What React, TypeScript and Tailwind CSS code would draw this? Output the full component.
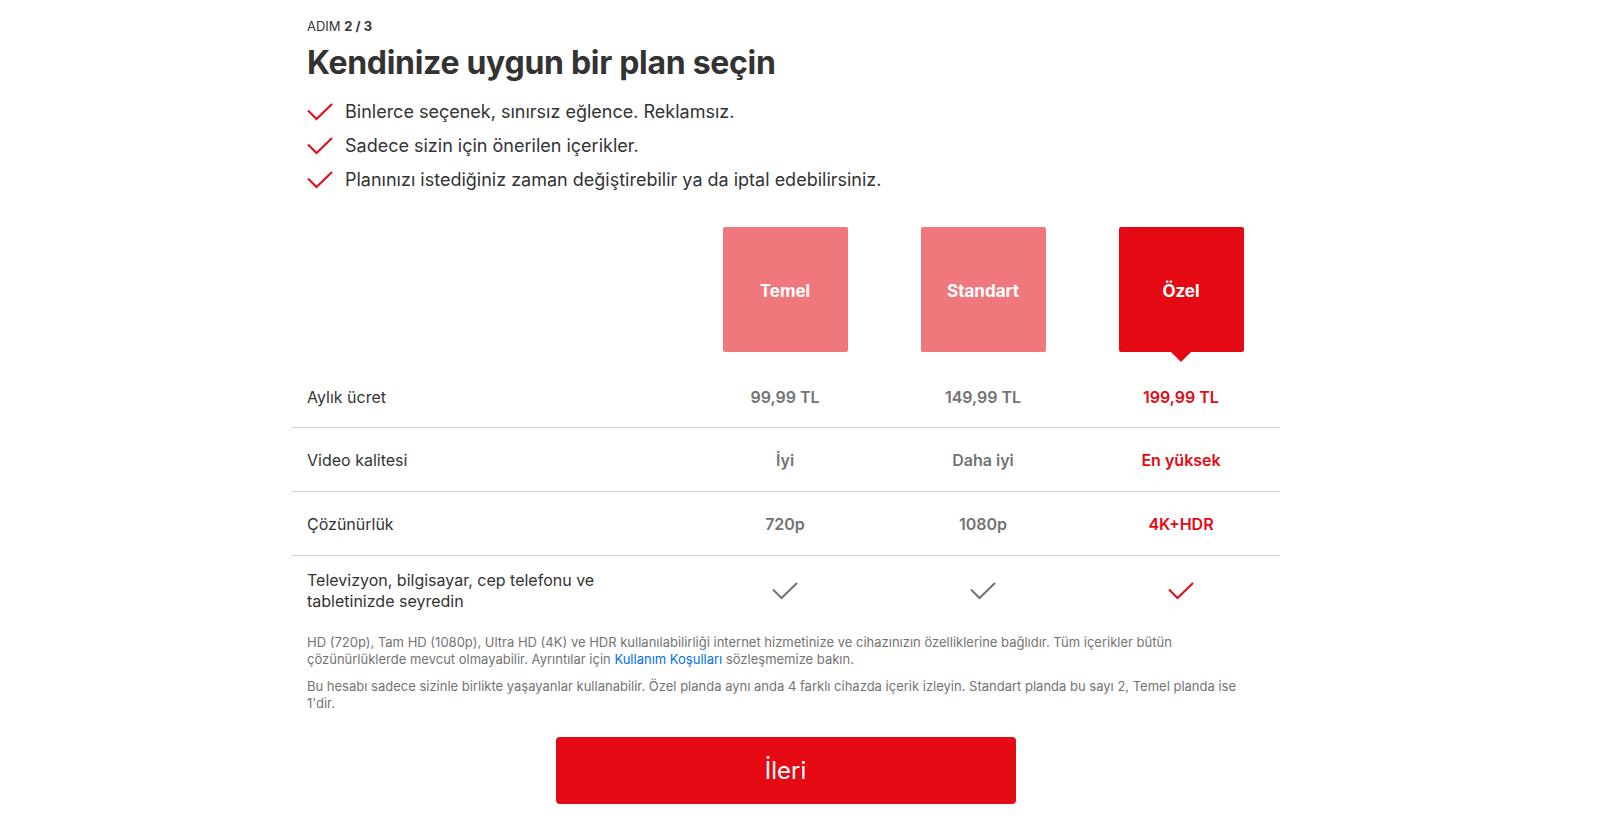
import React from "react";

function Check({ color, className }: { color: string; className?: string }) {
  return (
    <svg viewBox="0 0 26 18" width="26" height="18" className={className} fill="none">
      <polyline points="1,7.5 9.5,16 25,1" stroke={color} strokeWidth="2" strokeLinecap="butt" strokeLinejoin="miter" />
    </svg>
  );
}

const plans = [
  { name: "Temel", price: "99,99 TL", quality: "İyi", res: "720p", selected: false },
  { name: "Standart", price: "149,99 TL", quality: "Daha iyi", res: "1080p", selected: false },
  { name: "Özel", price: "199,99 TL", quality: "En yüksek", res: "4K+HDR", selected: true },
];

function ValueCell({ children, selected }: { children: React.ReactNode; selected: boolean }) {
  return (
    <div
      className={
        "flex justify-center text-[16px] leading-[20px] font-semibold " +
        (selected ? "text-[#e50914]" : "text-[#737373]")
      }
    >
      {children}
    </div>
  );
}

export default function App() {
  return (
    <div className="min-h-screen bg-white font-['Inter','Liberation_Sans',sans-serif] text-[#333333]">
      <div className="flex justify-center pr-[29px]">
        <div className="w-[989px] pt-[18px]">
          <div className="px-4">
            <div className="text-[13px] leading-[16px] uppercase text-[#333]">
              Adım <span className="font-bold">2 / 3</span>
            </div>
            <h1 className="mt-[9px] text-[32px] leading-[40px] font-bold tracking-[-0.3px] text-[#333]">
              Kendinize uygun bir plan seçin
            </h1>
            <ul className="mt-[12px]">
              {[
                "Binlerce seçenek, sınırsız eğlence. Reklamsız.",
                "Sadece sizin için önerilen içerikler.",
                "Planınızı istediğiniz zaman değiştirebilir ya da iptal edebilirsiniz.",
              ].map((t) => (
                <li key={t} className="flex h-[34px] items-center gap-[12px] text-[18px] leading-[24px]">
                  <Check color="#e50914" className="shrink-0" />
                  <span>{t}</span>
                </li>
              ))}
            </ul>
          </div>

          <div className="mt-[30px] grid grid-cols-[395px_198px_198px_198px]">
            {/* header row */}
            <div />
            {plans.map((p) => (
              <div key={p.name} className="flex justify-center">
                <div
                  className={
                    "relative flex h-[125px] w-[125px] items-center justify-center rounded-[2px] pt-[4px] text-[17px] font-bold text-white " +
                    (p.selected ? "bg-[#e50914]" : "bg-[#f0777c]")
                  }
                >
                  {p.name}
                  {p.selected && (
                    <div className="absolute left-1/2 top-full h-0 w-0 -translate-x-1/2 border-x-[10px] border-t-[10px] border-x-transparent border-t-[#e50914]" />
                  )}
                </div>
              </div>
            ))}

            {/* price row */}
            <div className="col-span-4 grid h-[76px] grid-cols-[395px_198px_198px_198px] items-end border-b border-[#d2d2d2] pb-[20px]">
              <div className="px-4 text-[16px] leading-[20px]">Aylık ücret</div>
              {plans.map((p) => (
                <ValueCell key={p.name} selected={p.selected}>
                  {p.price}
                </ValueCell>
              ))}
            </div>

            {/* video quality */}
            <div className="col-span-4 grid h-[64px] grid-cols-[395px_198px_198px_198px] items-center border-b border-[#d2d2d2]">
              <div className="px-4 text-[16px] leading-[20px]">Video kalitesi</div>
              {plans.map((p) => (
                <ValueCell key={p.name} selected={p.selected}>
                  {p.quality}
                </ValueCell>
              ))}
            </div>

            {/* resolution */}
            <div className="col-span-4 grid h-[64px] grid-cols-[395px_198px_198px_198px] items-center border-b border-[#d2d2d2]">
              <div className="px-4 text-[16px] leading-[20px]">Çözünürlük</div>
              {plans.map((p) => (
                <ValueCell key={p.name} selected={p.selected}>
                  {p.res}
                </ValueCell>
              ))}
            </div>

            {/* devices */}
            <div className="col-span-4 grid h-[70px] grid-cols-[395px_198px_198px_198px] items-center">
              <div className="px-4 pr-[60px] text-[16px] leading-[21px]">
                Televizyon, bilgisayar, cep telefonu ve tabletinizde seyredin
              </div>
              {plans.map((p) => (
                <div key={p.name} className="flex justify-center">
                  <Check color={p.selected ? "#e50914" : "#737373"} />
                </div>
              ))}
            </div>
          </div>

          <div className="mt-[8px] px-4 text-[13px] leading-[17px] text-[#737373]">
            <p>
              HD (720p), Tam HD (1080p), Ultra HD (4K) ve HDR kullanılabilirliği internet hizmetinize ve cihazınızın
              özelliklerine bağlıdır. Tüm içerikler bütün çözünürlüklerde mevcut olmayabilir. Ayrıntılar için{" "}
              <span className="text-[#0071eb]">Kullanım Koşulları</span> sözleşmemize bakın.
            </p>
            <p className="mt-[10px]">
              Bu hesabı sadece sizinle birlikte yaşayanlar kullanabilir. Özel planda aynı anda 4 farklı cihazda içerik
              izleyin. Standart planda bu sayı 2, Temel planda ise 1'dir.
            </p>
          </div>

          <div className="mt-[25px] flex justify-center">
            <button className="flex h-[67px] w-[460px] items-center justify-center rounded-[4px] bg-[#e50914] text-[24px] text-white">
              İleri
            </button>
          </div>
        </div>
      </div>
    </div>
  );
}
